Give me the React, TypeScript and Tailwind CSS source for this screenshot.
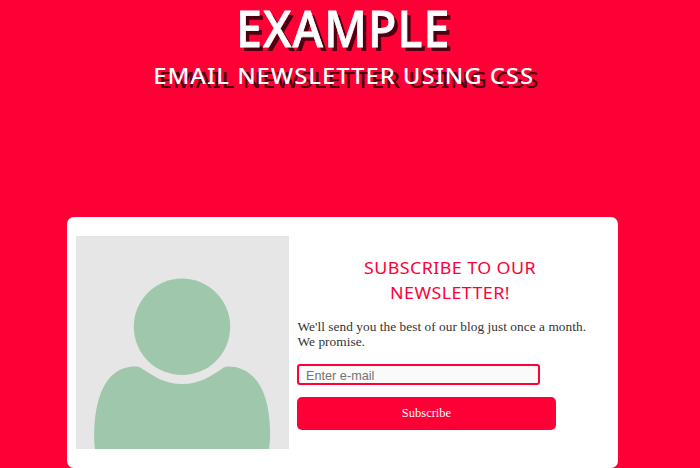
const comic = "[font-family:'Comic_Sans_MS','Noto_Sans',sans-serif]";
const serif = "[font-family:'Liberation_Serif',serif]";

function Avatar() {
  return (
    <svg
      className="block h-[213px] w-[213px] shrink-0 bg-[#e6e6e6]"
      viewBox="0 0 213 213"
      fill="#9fc7ac"
      aria-label="Profile"
    >
      <circle cx="106" cy="90.8" r="48.2" />
      <path d="M19 213 C18 207 18 201 18.3 193 C20 154 34 129 61 130.5 Q63 130.7 65 132 C79 141 89 148 106 148 C123 148 134 141 147 132 Q149 130.7 151 130.5 C178 130 193 154 194 193 C194.2 201 194 207 193 213 Z" />
    </svg>
  );
}

export default function App() {
  return (
    <div className="flex h-[468px] w-[700px] flex-col bg-[#ff0036]">
      <header className={`flex h-[217px] shrink-0 flex-col items-center text-center uppercase text-white ${comic}`}>
        <h1 className="mr-[13px] h-[62px] scale-x-[0.93] whitespace-nowrap text-[50px] font-medium leading-[56px] tracking-[1.2px] [-webkit-text-stroke:0.8px_white] [stroke-linejoin:round] [text-shadow:4px_4px_0_#4c0010]">
          Example
        </h1>
        <h2 className="mr-[13px] h-[30px] scale-x-[1.06] whitespace-nowrap text-[22.5px] font-medium leading-[27px] tracking-[0.9px] [text-shadow:5px_4px_0_#4c0010]">
          Email newsletter using CSS
        </h2>
      </header>
      <main className="ml-[67px] flex h-[251px] w-[551px] shrink-0 rounded-[7px] bg-white pl-[9px] pt-[19px]">
        <Avatar />
        <form className="ml-[8px] flex w-[305px] flex-col" onSubmit={(e) => e.preventDefault()}>
          <h3 className={`mt-[20px] scale-x-[1.05] pl-[1px] text-center text-[17px] uppercase leading-[24.5px] tracking-[0.4px] text-[#ff0036] ${comic}`}>
            Subscribe to our
            <br />
            newsletter!
          </h3>
          <p className={`mt-[14px] whitespace-nowrap pl-[0.5px] text-[13.33px] leading-[15px] tracking-[0.04px] text-[#333] ${serif}`}>
            We'll send you the best of our blog just once a month.
            <br />
            We promise.
          </p>
          <input
            type="email"
            placeholder="Enter e-mail"
            className="mt-[15px] h-[21px] w-[243px] rounded-[3px] border-2 border-[#ff0036] bg-[#fafafa] px-[7px] pt-[2px] text-[12.7px] leading-[17px] outline-none placeholder:text-[#757575] [font-family:'Liberation_Sans',sans-serif]"
          />
          <button className={`mt-[12px] h-[33px] w-[259px] rounded-[5px] bg-[#ff0036] text-[12.5px] text-white ${serif}`}>
            Subscribe
          </button>
        </form>
      </main>
    </div>
  );
}
